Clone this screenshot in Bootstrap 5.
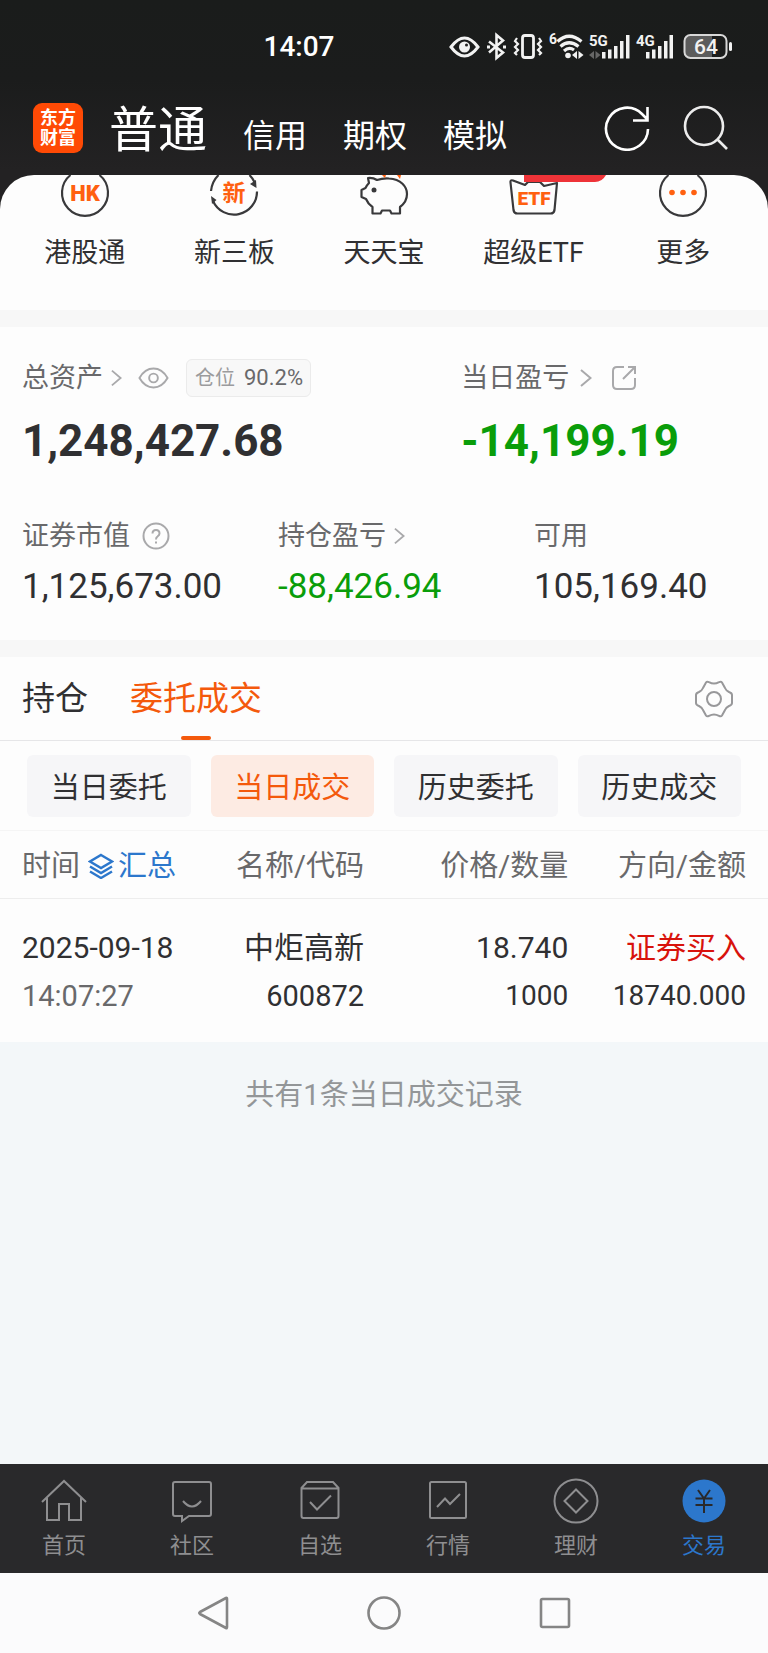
<!DOCTYPE html>
<html lang="zh-CN">
<head>
<meta charset="utf-8">
<meta name="viewport" content="width=device-width, initial-scale=1">
<title>东方财富 - 交易</title>
<link href="https://cdn.jsdelivr.net/npm/bootstrap@5.3.0/dist/css/bootstrap.min.css" rel="stylesheet">
<style>
  :root { --ink: #303032; --mute: #69696b; --soft: #9b9b9d; --orange: #f4590c; --green: #0a9d0a; --blue: #2c77cc; }
  body { font-family: Roboto, "Noto Sans CJK SC", sans-serif; color: var(--ink); background: #fdfdfd; }
  a { color: inherit; text-decoration: none; }
  svg { display: block; flex-shrink: 0; }
  button { color: inherit; }
  .plain-btn { border: 0; background: none; padding: 0; }
  .top-area { background: linear-gradient(#1a1c1b 0, #1b1c1c 80px, #232223 170px); }
  .status-row { height: 94px; padding-right: 33px; }
  .clock { font-size: 28px; font-weight: 500; line-height: 94px; }
  .clock span { margin-right: 170px; }
  .main-row { height: 81px; padding: 0 39px 13px 33px; }
  .brand-tile { width: 50px; height: 50px; border-radius: 9px; background: #ff4a05; font-size: 18px; font-weight: 700; line-height: 20px; }
  .mode-nav { gap: 36px; margin: 6px 0 0 26px; font-size: 32px; line-height: 58px; }
  .mode-nav .active { font-size: 49px; line-height: 68px; }
  .search-btn { margin-left: 33px; }
  .sheet-wrap { background: #232223; }
  .sheet { background: #fdfdfd; border-radius: 34px 34px 0 0; padding: 0 10px 41px; }
  .shortcut { flex: 1 1 0; font-size: 27px; line-height: 32px; gap: 20px; }
  .shortcut svg { overflow: visible; }
  .band { height: 17px; background: #f7f7f7; }
  .assets { padding: 31px 0 29px; }
  .cell { padding-left: 22px; }
  .cell-wide { flex: 0 0 57.2%; }
  .cap-line { height: 40px; line-height: 40px; font-size: 27px; color: var(--mute); }
  .big-num { margin-top: 15px; font-size: 44px; font-weight: 700; line-height: 56px; }
  .mid-num { margin-top: 7px; font-size: 35px; line-height: 48px; }
  .second-line { margin-top: 47px; }
  .ratio-tag { height: 38px; border: 1px solid #ebebeb; border-radius: 6px; background: #f8f8f8; padding: 0 7px 0 8px; margin-left: 17px; font-size: 22px; line-height: 36px; gap: 9px; }
  .ratio-tag span { font-size: 20px; color: var(--soft); }
  .down { color: var(--green); }
  .view-tabs { height: 84px; padding: 0 34px 0 22px; border-bottom: 1px solid #e6e6e8; font-size: 33px; line-height: 83px; gap: 42px; }
  .view-tabs .active { color: var(--orange); position: relative; }
  .view-tabs .active::after { content: ""; position: absolute; left: 50%; bottom: 0; width: 30px; height: 4px; margin-left: -15px; border-radius: 2px; background: var(--orange); }
  .filters { padding: 14px 27px 13px; gap: 20px; border-bottom: 1px solid #f5f5f5; }
  .filters button { flex: 1 1 0; height: 62px; border: 0; border-radius: 6px; background: #f6f6f8; font-size: 29px; padding: 5px 0 0; }
  .filters .active { background: #fdebe3; color: var(--orange); }
  .deals { table-layout: fixed; width: 100%; margin: 0; text-align: right; font-size: 29px; }
  .deals th { height: 67px; line-height: 62px; padding: 4px 0 0; font-weight: 400; color: var(--mute); border-bottom: 1px solid #ededed; }
  .deals td { padding: 25px 0 22px; line-height: 48px; }
  .deals th:first-child, .deals td:first-child { padding-left: 22px; text-align: left; }
  .deals th:last-child, .deals td:last-child { padding-right: 22px; }
  .deals .lead-line { font-size: 30px; }
  .deals .amount { font-size: 28px; }
  .sum-link { color: var(--blue); margin-left: 8px; gap: 4px; }
  .buy { color: #d8130c; }
  .rest { background: #f3f7f9; padding-top: 33px; font-size: 29px; line-height: 40px; color: #939698; }
  .tab-bar { height: 109px; background: #29292b; color: #8e8e90; font-size: 22px; line-height: 32px; }
  .tab-bar a { flex: 1 1 0; padding-top: 14px; gap: 6px; }
  .tab-bar .active { color: var(--blue); }
  .sys-bar { height: 80px; padding: 0 16.66%; background: #fbfbfc; color: #858585; }
  .sys-bar button { flex: 1 1 0; }
</style>
</head>
<body>
<div class="d-flex flex-column min-vh-100">
  <header class="top-area text-white">
    <div class="status-row d-flex align-items-center justify-content-end position-relative">
      <div class="clock position-absolute top-0 start-0 w-100 text-center"><span>14:07</span></div>
      <svg width="288" height="30" viewBox="0 0 288 30" fill="none" stroke="#f2f2f2" font-family="Roboto" font-weight="700">
        <path d="M4 15Q17.500-3 31 15Q17.500 33 4 15Z" stroke-width="3"/><circle cx="17.500" cy="15" r="5.500" fill="#f2f2f2" stroke="none"/><circle cx="19.500" cy="13" r="1.500" fill="#222" stroke="none"/>
        <path d="M42 9.500L56 20.500L49.500 26V3L56 8.500L42 20.500" stroke-width="2.600"/><path d="M40 15H43M56 15H59" stroke-width="3"/>
        <rect x="75.500" y="3.500" width="11" height="22" rx="2.500" stroke-width="2.800"/>
        <path d="M70 6l-2 3 3 3-3 3 3 3-3 3 2 2M92 6l2 3-3 3 3 3-3 3 3 3-2 2" stroke-width="2.200"/>
        <path d="M110.500 9.500Q122-1 134.500 9.500M113.500 14.500Q122 7 131.500 14.500M117 19Q122 14.500 127 18" stroke-width="3.200"/>
        <g fill="#f2f2f2" stroke="none">
          <circle cx="121" cy="23.500" r="2.800"/><path d="M130 19v8l-5-4zM131.500 19v8l5-4z"/>
          <text x="102" y="12" font-size="14">6</text>
          <text x="142" y="14" font-size="15">5G</text><text x="189" y="14" font-size="15">4G</text>
          <path d="M155 20h3.500v6.500h-3.500zM161 17.500h3.500v9h-3.500zM167 14h3.500v12.500h-3.500zM173 9h3.500v17.500h-3.500zM179 3h3.500v23.500h-3.500z"/>
          <path d="M199 20h3.500v6.500h-3.500zM205 17.500h3.500v9h-3.500zM211 14h3.500v12.500h-3.500zM217 9h3.500v17.500h-3.500zM222.500 3h3.500v23.500h-3.500z"/>
          <path fill="#666" d="M147 19v8l-5-4zM148.500 19v8l5-4z"/>
          <path fill="#5c5c5c" d="M242 4h23v21h-23q-4 0-4-4v-13q0-4 4-4z"/>
          <rect x="282" y="10" width="3" height="9" rx="1.500"/>
          <text x="247" y="22" font-size="21" font-weight="500">64</text>
        </g>
        <rect x="237.500" y="3" width="42" height="23" rx="6" stroke-width="2" stroke="#d8d8d8"/>
      </svg>
    </div>
    <div class="main-row d-flex align-items-center">
      <div class="brand-tile d-flex flex-column align-items-center justify-content-center"><span>东方</span><span>财富</span></div>
      <nav class="mode-nav d-flex align-items-end">
        <a href="#" class="active">普通</a><a href="#">信用</a><a href="#">期权</a><a href="#">模拟</a>
      </nav>
      <button class="plain-btn ms-auto" aria-label="刷新">
        <svg width="46" height="46" viewBox="0 0 46 46" fill="none" stroke="#fff" stroke-width="2.600"><path d="M44 24A21 21 0 1 1 38 9L43 14M43.500 2V15.500H29"/></svg>
      </button>
      <button class="plain-btn search-btn" aria-label="搜索">
        <svg width="46" height="46" viewBox="0 0 46 46" fill="none" stroke="#ececec" stroke-width="2.600"><circle cx="21" cy="21" r="19"/><path d="M34 34L44 44"/></svg>
      </button>
    </div>
  </header>

  <main class="flex-grow-1 d-flex flex-column">
    <div class="sheet-wrap">
      <div class="sheet d-flex">
        <a href="#" class="shortcut d-flex flex-column align-items-center">
          <svg width="60" height="42" viewBox="0 0 60 42"><path d="M15.500 0A23 23 0 1 0 44.500 0" fill="none" stroke="#39393b" stroke-width="2.200"/><text x="30" y="25.500" text-anchor="middle" font-size="22" font-weight="900" fill="#ff6010">HK</text></svg>
          <span>港股通</span>
        </a>
        <a href="#" class="shortcut d-flex flex-column align-items-center">
          <svg width="60" height="42" viewBox="0 0 60 42"><path d="M7 16Q8 6.500 14.500 0M45.500 0Q49 3.500 51 8M53 16.500A23 23 0 0 1 9 26" fill="none" stroke="#39393b" stroke-width="2.200"/><path d="M52.500 13l-6.500-4 6-4zM7 21l5.500 4-4.500 4z" fill="#39393b"/><text x="30" y="26" text-anchor="middle" font-size="23" font-weight="700" fill="#ff6010">新</text></svg>
          <span>新三板</span>
        </a>
        <a href="#" class="shortcut d-flex flex-column align-items-center">
          <svg width="60" height="42" viewBox="0 0 60 42"><path d="M14 3Q19 2.500 23 5Q29 3 35 3.500C47 4 53 12 53 19C53 25 50 29 46 32V38.500H37.500L36 35.500H28L26.500 38.500H18.500V32Q14 29 12 24L7.500 22V15L11.500 13Q13 10 15 8Z" fill="none" stroke="#39393b" stroke-width="2.200" stroke-linejoin="round"/><circle cx="20" cy="15" r="2.500" fill="#39393b"/><path d="M28 0h4l-1 3zM43 0h4l-1 4z" fill="#ff6010"/></svg>
          <span>天天宝</span>
        </a>
        <a href="#" class="shortcut d-flex flex-column align-items-center">
          <svg width="60" height="42" viewBox="0 0 60 42"><path d="M21 10L9 5.500Q6 4.500 6.500 7.500L9.500 35Q10 38.500 13.500 38.500H46.500Q50 38.500 50.500 35L53 8L40 11L36 7H24Z" fill="none" stroke="#39393b" stroke-width="2.200" stroke-linejoin="round"/><path d="M20 0H102Q98 7 91 7H20Z" fill="#ee3338"/><text x="30" y="29.500" text-anchor="middle" font-size="19" font-weight="900" fill="#ff6010" stroke="#fdfdfd" stroke-width="4" paint-order="stroke">ETF</text></svg>
          <span>超级ETF</span>
        </a>
        <a href="#" class="shortcut d-flex flex-column align-items-center">
          <svg width="60" height="42" viewBox="0 0 60 42"><path d="M15.500 0A23 23 0 1 0 44.500 0" fill="none" stroke="#39393b" stroke-width="2.200"/><g fill="#ff6010"><circle cx="19" cy="17.500" r="2.800"/><circle cx="30" cy="17.500" r="2.800"/><circle cx="41" cy="17.500" r="2.800"/></g></svg>
          <span>更多</span>
        </a>
      </div>
    </div>
    <div class="band"></div>

    <section class="assets">
      <div class="d-flex">
        <div class="cell cell-wide">
          <div class="cap-line d-flex align-items-center">
            <a href="#">总资产</a>
            <svg class="ms-2" width="11" height="18" viewBox="0 0 12 18" fill="none" stroke="#a9a9ab" stroke-width="2"><path d="M1 1L10.500 9L1 17"/></svg>
            <button class="plain-btn ms-3" aria-label="隐藏金额"><svg width="31" height="24" viewBox="0 0 32 24" fill="none" stroke="#a9a9ab" stroke-width="2"><path d="M1.500 12C9-1 23-1 30.500 12C23 25 9 25 1.500 12Z"/><circle cx="16" cy="12" r="4.500"/></svg></button>
            <div class="ratio-tag d-flex"><span>仓位</span>90.2%</div>
          </div>
          <div class="big-num">1,248,427.68</div>
        </div>
        <div class="cell">
          <div class="cap-line d-flex align-items-center">
            <a href="#">当日盈亏</a>
            <svg style="margin-left:11px" width="12" height="18" viewBox="0 0 12 18" fill="none" stroke="#a9a9ab" stroke-width="2"><path d="M1 1L10.500 9L1 17"/></svg>
            <button class="plain-btn" aria-label="分享" style="margin-left:19px"><svg width="26" height="26" viewBox="0 0 26 26" fill="none" stroke="#a9a9ab" stroke-width="2"><path d="M13 2H6Q2 2 2 6V20Q2 24 6 24H20Q24 24 24 20V13M12 14L24 2M17 2H24V9"/></svg></button>
          </div>
          <div class="big-num down">-14,199.19</div>
        </div>
      </div>
      <div class="second-line row g-0">
        <div class="cell col-4">
          <div class="cap-line d-flex align-items-center">证券市值
            <button class="plain-btn" aria-label="说明" style="margin-left:12px"><svg width="28" height="28" viewBox="0 0 28 28" fill="none" stroke="#a9a9ab" stroke-width="2"><circle cx="14" cy="14" r="12.500"/><path d="M10.500 11.500Q10.500 8 14 8T17.500 11.500Q17.500 13 15.500 14.500Q14 15.500 14 17.500M14 19.500V21.500"/></svg></button>
          </div>
          <div class="mid-num">1,125,673.00</div>
        </div>
        <div class="cell col-4">
          <div class="cap-line d-flex align-items-center"><a href="#">持仓盈亏</a>
            <svg class="ms-2" width="11" height="18" viewBox="0 0 12 18" fill="none" stroke="#a9a9ab" stroke-width="2"><path d="M1 1L10.500 9L1 17"/></svg>
          </div>
          <div class="mid-num down">-88,426.94</div>
        </div>
        <div class="cell col-4">
          <div class="cap-line">可用</div>
          <div class="mid-num">105,169.40</div>
        </div>
      </div>
    </section>
    <div class="band"></div>

    <div class="view-tabs d-flex align-items-center">
      <a href="#">持仓</a><a href="#" class="active">委托成交</a>
      <button class="plain-btn ms-auto" aria-label="设置"><svg width="40" height="40" viewBox="0 0 40 40" fill="none" stroke="#98989a" stroke-width="2"><path d="M12 3.500Q13 2 15 3.200Q20 6 25 3.200Q27 2 28 3.500L31 9Q32 11.500 35 13Q38 14 38 16V24Q38 26 35 27Q32 28.500 31 31L28 36.500Q27 38 25 36.800Q20 34 15 36.800Q13 38 12 36.500L9 31Q8 28.500 5 27Q2 26 2 24V16Q2 14 5 13Q8 11.500 9 9Z"/><circle cx="20" cy="20" r="7"/></svg></button>
    </div>
    <div class="filters d-flex">
      <button>当日委托</button><button class="active">当日成交</button><button>历史委托</button><button>历史成交</button>
    </div>

    <table class="deals">
      <colgroup><col style="width:25%"><col style="width:22.400%"><col style="width:26.600%"><col></colgroup>
      <thead>
        <tr>
          <th scope="col"><div class="d-flex align-items-center">时间
            <a href="#" class="sum-link d-flex align-items-center"><svg width="26" height="26" viewBox="0 0 26 26" fill="none" stroke="currentColor" stroke-width="2.400"><path d="M13 2L24 8.500L13 15L2 8.500ZM2 13.500L13 20L24 13.500M2 18.500L13 25L24 18.500"/></svg>汇总</a></div></th>
          <th scope="col">名称/代码</th><th scope="col">价格/数量</th><th scope="col">方向/金额</th>
        </tr>
      </thead>
      <tbody>
        <tr>
          <td><div class="lead-line">2025-09-18</div><div style="color:var(--mute)">14:07:27</div></td>
          <td><div class="lead-line">中炬高新</div><div>600872</div></td>
          <td><div class="lead-line">18.740</div><div class="amount">1000</div></td>
          <td><div class="lead-line buy">证券买入</div><div class="amount">18740.000</div></td>
        </tr>
      </tbody>
    </table>
    <div class="rest flex-grow-1 text-center">共有1条当日成交记录</div>
  </main>

  <nav class="tab-bar d-flex">
    <a href="#" class="d-flex flex-column align-items-center"><svg width="46" height="46" viewBox="0 0 46 46" fill="none" stroke="currentColor" stroke-width="2"><path d="M1 24L23 3L45 24M6 20V42H18V26H28V42H40V20"/></svg>首页</a>
    <a href="#" class="d-flex flex-column align-items-center"><svg width="46" height="46" viewBox="0 0 46 46" fill="none" stroke="currentColor" stroke-width="2"><path d="M6 4H40Q42 4 42 6V36Q42 38 40 38H20L13 43V38H6Q4 38 4 36V6Q4 4 6 4ZM14 23Q23 34 32 23"/></svg>社区</a>
    <a href="#" class="d-flex flex-column align-items-center"><svg width="46" height="46" viewBox="0 0 46 46" fill="none" stroke="currentColor" stroke-width="2"><path d="M4.500 10L10 4H36L41.500 10V38Q41.500 40 39.500 40H6.500Q4.500 40 4.500 38ZM4.500 10.500H41.500M13 24L20 31.500L34 17.500"/></svg>自选</a>
    <a href="#" class="d-flex flex-column align-items-center"><svg width="46" height="46" viewBox="0 0 46 46" fill="none" stroke="currentColor" stroke-width="2"><rect x="5" y="4" width="36" height="36" rx="1.500"/><path d="M12 29L20 20.500L25 26L35 16"/></svg>行情</a>
    <a href="#" class="d-flex flex-column align-items-center"><svg width="46" height="46" viewBox="0 0 46 46" fill="none" stroke="currentColor" stroke-width="2"><circle cx="23" cy="23" r="21.500"/><path d="M23 11.500L34.500 23L23 34.500L11.500 23Z"/></svg>理财</a>
    <a href="#" class="active d-flex flex-column align-items-center"><svg width="46" height="46" viewBox="0 0 46 46" fill="none" stroke="#29292b" stroke-width="2"><circle cx="23" cy="23" r="21.500" fill="#2c77cc" stroke="none"/><path d="M17 12L23 20.500L29 12M14.500 20.500H31.500M14.500 27H31.500M23 20.500V35"/></svg>交易</a>
  </nav>
  <footer class="sys-bar d-flex align-items-center">
    <button class="plain-btn d-flex justify-content-center" aria-label="返回"><svg width="34" height="36" viewBox="0 0 34 36" fill="none" stroke="currentColor" stroke-width="2.600" stroke-linejoin="round"><path d="M30 3Q31 2.500 31 4V32Q31 33.500 30 33L4 19Q2.500 18 4 17Z"/></svg></button>
    <button class="plain-btn d-flex justify-content-center" aria-label="主屏幕"><svg width="36" height="36" viewBox="0 0 36 36" fill="none" stroke="currentColor" stroke-width="2.600"><circle cx="18" cy="18" r="15.500"/></svg></button>
    <button class="plain-btn d-flex justify-content-center" aria-label="最近任务"><svg width="36" height="36" viewBox="0 0 36 36" fill="none" stroke="currentColor" stroke-width="2.600"><rect x="4" y="4" width="28" height="28" rx="1.500"/></svg></button>
  </footer>
</div>
<script src="https://cdn.jsdelivr.net/npm/bootstrap@5.3.0/dist/js/bootstrap.bundle.min.js"></script>
</body>
</html>
